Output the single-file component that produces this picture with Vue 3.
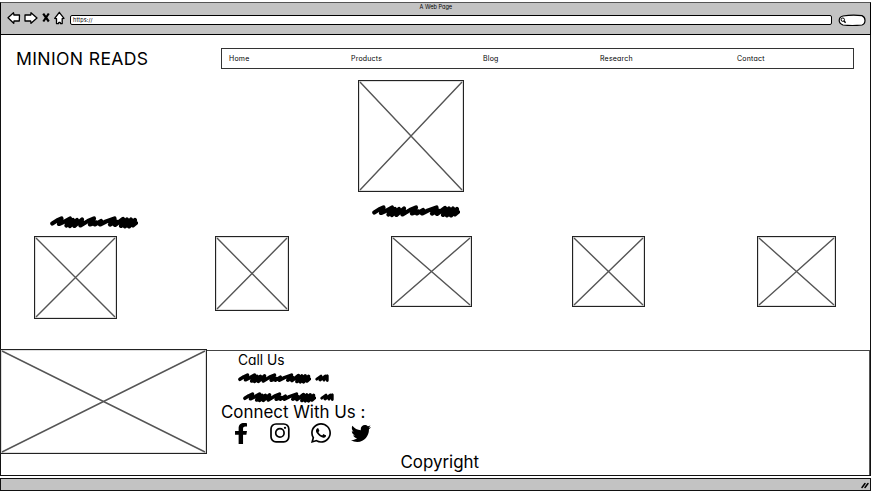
<script setup>
import { h } from 'vue'

const links = ['Home', 'Products', 'Blog', 'Research', 'Contact']
const books = [
  { w: 83, h: 83 },
  { w: 74, h: 75 },
  { w: 81, h: 71 },
  { w: 73, h: 71 },
  { w: 79, h: 71 },
]

const Placeholder = (props) =>
  h('svg', { width: props.w, height: props.h, class: 'placeholder' }, [
    h('rect', { x: 0.5, y: 0.5, width: props.w - 1, height: props.h - 1, fill: '#fff', stroke: '#222', 'stroke-width': 1.3 }),
    h('path', {
      d: `M2 2L${props.w - 2} ${props.h - 2}M${props.w - 2} 2L2 ${props.h - 2}`,
      stroke: '#555', 'stroke-width': 1.4, fill: 'none',
    }),
  ])
Placeholder.props = ['w', 'h']

const Scribble = (props) =>
  h('svg', { width: props.w, height: props.h, viewBox: '0 0 88 13', preserveAspectRatio: 'none', class: 'scribble' },
    h('path', {
      d: 'M2.3 7.5L7 4.5L11.5 2.5L9 8L14.5 5.5L20 2.5L16.5 9.5L23 4L20 10L27 4L24.5 10L32 3.5L30.5 9.5L38 5L44 2.5L40 8.5L46 6.5L45 8.5L51 5L50 8.5L56 5.5L64.5 2.5L60 8.5L66 5.5L65 9L73 3L71 10L77 3.5L75 10.5L81 3.5L79 10.5L85 4L83 9.5L86 7',
      stroke: '#000', 'stroke-width': 4.2, 'stroke-linecap': 'round', 'stroke-linejoin': 'round', fill: 'none',
    }))
Scribble.props = ['w', 'h']

const ShortScribble = () =>
  h('svg', { width: 14, height: 10, viewBox: '0 0 14 10' },
    h('path', {
      d: 'M1.8 6.2L6 3L5 7L10.5 3L9 7.2L12.3 2.8V7.5',
      stroke: '#000', 'stroke-width': 2.8, 'stroke-linecap': 'round', 'stroke-linejoin': 'round', fill: 'none',
    }))
</script>

<template>
  <div class="window">
    <header class="chrome">
      <div class="caption">A Web Page</div>
      <div class="tools">
        <svg class="controls" width="62" height="16" viewBox="0 0 62 16" fill="#fff" stroke="#000" stroke-width="1.3" stroke-linejoin="round">
          <path d="M1 7.8L6.5 2.8L7 5L12.5 5L12.3 11L7 11L6.7 13.3Z" />
          <path d="M30 8L24 2.8L23.8 5L18 5L18 11L23.7 11L24 13.3Z" />
          <path d="M36.2 3.7L41.8 11.5M41.8 3.5L36.3 11.5" stroke-width="2.2" />
          <path d="M47.7 8.3L52.3 2.3L57 8.3L55.2 8.6L55.2 13.5L53.7 13.7L53.2 12.5L51.8 12.5L51.3 13.7L49.5 13.5L49.5 8.6Z" />
        </svg>
        <div class="address">https://</div>
        <svg class="search" width="29" height="13" viewBox="0 0 29 13" fill="none" stroke="#000">
          <path d="M5 2Q14 .5 24 1.6Q27 3 27 6.2Q27 10 24 11Q14 12 5 11Q1.2 9.5 1.2 6.5Q1.2 3 5 2Z" fill="#fff" stroke-width="1.2" />
          <circle cx="4.8" cy="5.7" r="1.7" />
          <path d="M6 7L7.6 8.8" stroke-width="1.4" />
        </svg>
      </div>
    </header>

    <main class="page">
      <div class="topbar">
        <h1 class="brand">MINION READS</h1>
        <nav class="nav">
          <a v-for="link in links" :key="link">{{ link }}</a>
        </nav>
      </div>

      <section class="hero">
        <Placeholder :w="106" :h="112" />
        <Scribble class="hero-label" :w="88" :h="13" />
      </section>

      <section class="catalog">
        <Scribble class="catalog-label" :w="88" :h="13" />
        <div class="books">
          <Placeholder v-for="(book, i) in books" :key="i" :w="book.w" :h="book.h" />
        </div>
      </section>

      <footer class="footer">
        <Placeholder class="footer-image" :w="207" :h="105" />
        <div class="contact">
          <h2 class="call">Call Us</h2>
          <div class="phone"><Scribble :w="73" :h="11" /><ShortScribble /></div>
          <div class="phone second"><Scribble :w="73" :h="11" /><ShortScribble /></div>
          <h2 class="connect">Connect With Us :</h2>
          <div class="social">
            <svg width="12" height="21" viewBox="22 0 272 512" preserveAspectRatio="none"><path d="M279.14 288l14.22-92.66h-88.91v-60.13c0-25.35 12.42-50.06 52.24-50.06h40.42V6.26S260.43 0 225.36 0c-73.22 0-121.08 44.38-121.08 124.72v70.62H22.89V288h81.39v224h100.17V288z" /></svg>
            <svg width="20" height="20" viewBox="0 0 20 20" fill="none" stroke="#000" stroke-width="1.7"><rect x="1" y="1" width="17.8" height="17.8" rx="5" /><circle cx="9.9" cy="9.9" r="4.2" /><circle cx="15" cy="4.8" r="1.15" fill="#000" stroke="none" /></svg>
            <svg width="20" height="20" viewBox="0 32 448 448"><path d="M380.9 97.1C339 55.1 283.2 32 223.9 32c-122.4 0-222 99.6-222 222 0 39.1 10.2 77.3 29.6 111L0 480l117.7-30.9c32.4 17.7 68.9 27 106.1 27h.1c122.3 0 224.1-99.6 224.1-222 0-59.3-25.2-115-67.1-157zm-157 341.6c-33.2 0-65.7-8.9-94-25.7l-6.7-4-69.8 18.3L72 359.2l-4.4-7c-18.5-29.4-28.2-63.3-28.2-98.2 0-101.7 82.8-184.5 184.6-184.5 49.3 0 95.6 19.2 130.4 54.1 34.8 34.9 56.2 81.2 56.1 130.5 0 101.8-84.9 184.6-186.6 184.6zm101.2-138.2c-5.5-2.8-32.8-16.2-37.9-18-5.1-1.9-8.8-2.8-12.5 2.8-3.7 5.6-14.3 18-17.6 21.8-3.2 3.7-6.5 4.2-12 1.4-32.6-16.3-54-29.1-75.5-66-5.7-9.8 5.7-9.1 16.3-30.3 1.8-3.7.9-6.9-.5-9.7-1.4-2.8-12.5-30.1-17.1-41.2-4.5-10.8-9.1-9.3-12.5-9.5-3.2-.2-6.9-.2-10.6-.2-3.7 0-9.7 1.4-14.8 6.9-5.1 5.6-19.4 19-19.4 46.3 0 27.3 19.9 53.7 22.6 57.4 2.8 3.7 39.1 59.7 94.8 83.8 35.2 15.2 49 16.5 66.6 13.9 10.7-1.6 32.8-13.4 37.4-26.4 4.6-13 4.6-24.1 3.2-26.4-1.3-2.5-5-3.9-10.5-6.6z" /></svg>
            <svg width="20" height="17" viewBox="0 48 512 416" preserveAspectRatio="none"><path d="M459.37 151.716c.325 4.548.325 9.097.325 13.645 0 138.72-105.583 298.558-298.558 298.558-59.452 0-114.68-17.219-161.137-47.106 8.447.974 16.568 1.299 25.34 1.299 49.055 0 94.213-16.568 130.274-44.832-46.132-.975-84.792-31.188-98.112-72.772 6.498.974 12.995 1.624 19.818 1.624 9.421 0 18.843-1.3 27.614-3.573-48.081-9.747-84.143-51.98-84.143-102.985v-1.299c13.969 7.797 30.214 12.67 47.431 13.319-28.264-18.843-46.781-51.005-46.781-87.391 0-19.492 5.197-37.36 14.294-52.954 51.655 63.675 129.3 105.258 216.365 109.807-1.624-7.797-2.599-15.918-2.599-24.04 0-57.828 46.782-104.934 104.934-104.934 30.213 0 57.502 12.67 76.67 33.137 23.715-4.548 46.456-13.32 66.599-25.34-7.798 24.366-24.366 44.833-46.132 57.827 21.117-2.273 41.584-8.122 60.426-16.243-14.292 20.791-32.161 39.308-52.628 54.253z" /></svg>
          </div>
          <p class="copyright">Copyright</p>
        </div>
      </footer>
    </main>

    <div class="status">
      <svg width="8" height="7" viewBox="0 0 8 7" stroke="#000" stroke-width="1.5" stroke-linecap="round"><path d="M1 5.5L4 1.5M4 5.5L7 1.5" /></svg>
    </div>
  </div>
</template>

<style>
body {
  margin: 0;
  background: #fff;
}
</style>

<style scoped>
.window {
  box-sizing: border-box;
  width: 871px;
  height: 491px;
  padding-top: 2px;
  display: flex;
  flex-direction: column;
  font-family: Inter, "Liberation Sans", sans-serif;
  font-feature-settings: "cv11", "ss03";
  color: #000;
}
svg {
  display: block;
  flex: none;
}
h1, h2, p {
  margin: 0;
  font-weight: 400;
}
.chrome {
  box-sizing: border-box;
  height: 33px;
  border: 1px solid #000;
  border-top-color: #555;
  background: #c3c3c3;
}
.caption {
  height: 7px;
  padding-left: 418.5px;
  font-size: 5.6px;
  line-height: 9px;
}
.tools {
  display: flex;
  padding-left: 6px;
}
.controls {
  margin-right: 1px;
}
.address {
  box-sizing: border-box;
  width: 762px;
  height: 10px;
  margin-top: 5px;
  padding-left: 2px;
  border: 1px solid #000;
  border-radius: 2px;
  background: #fff;
  font-size: 5.5px;
  line-height: 8px;
  letter-spacing: 0.15px;
}
.search {
  margin: 4px 0 0 6px;
}
.page {
  box-sizing: border-box;
  height: 441px;
  border: solid #111;
  border-width: 0 1px 1px;
  display: flex;
  flex-direction: column;
}
.topbar {
  display: flex;
  padding: 13px 0 0 15px;
}
.brand {
  width: 205px;
  font-size: 17.6px;
  line-height: 21px;
  letter-spacing: 0.35px;
}
.nav {
  box-sizing: border-box;
  width: 633px;
  height: 21px;
  padding-left: 7px;
  border: 1px solid #333;
  display: grid;
  grid-template-columns: 122px 132px 117px 137px auto;
  font-size: 7px;
  line-height: 20px;
  letter-spacing: 0.2px;
}
.hero {
  padding: 11px 0 0 357px;
}
.hero-label {
  margin: 13px 0 0 14px;
}
.catalog-label {
  margin: -2px 0 0 49px;
}
.books {
  display: grid;
  grid-template-columns: 181px 176px 181px 185px auto;
  align-items: start;
  padding: 7px 0 0 33px;
}
.footer {
  display: flex;
  height: 125px;
  margin-top: auto;
  box-sizing: border-box;
  border-top: 1px solid #444;
  border-right: 1px solid #555;
}
.footer-image {
  margin: -2px 0 0 -1px;
}
.contact {
  padding-left: 14px;
}
.call {
  padding-left: 17px;
  font-size: 13.8px;
  line-height: 18px;
}
.phone {
  display: flex;
  gap: 4px;
  height: 11px;
  margin: 4px 0 0 17px;
}
.phone.second {
  margin: 8px 0 0 22px;
}
.connect {
  margin-top: -1px;
  font-size: 16.9px;
  line-height: 20px;
}
.social {
  display: grid;
  grid-template-columns: 35px 41px 40px 20px;
  align-items: center;
  height: 22px;
  padding: 0 0 1px 14px;
}
.copyright {
  padding: 7px 0 0 179.5px;
  font-size: 16.9px;
  line-height: 20px;
}
.status {
  box-sizing: border-box;
  height: 13px;
  margin-top: 2px;
  border: 1px solid #111;
  background: #c3c3c3;
  display: flex;
  justify-content: flex-end;
  padding: 3px 1px 0 0;
}
</style>
